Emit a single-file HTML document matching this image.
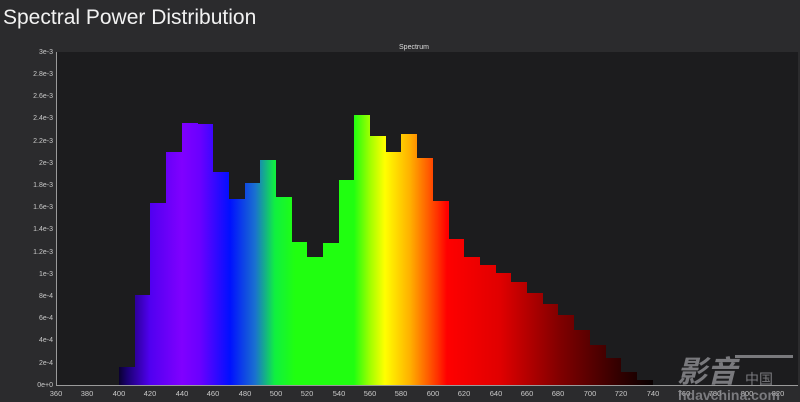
<!DOCTYPE html>
<html><head><style>
html,body{margin:0;padding:0;background:#2b2b2d;}
svg{display:block}
</style></head><body>
<svg width="800" height="402" viewBox="0 0 800 402" xmlns="http://www.w3.org/2000/svg" font-family="Liberation Sans, sans-serif">
<defs>
<linearGradient id="sp" gradientUnits="userSpaceOnUse" x1="119" y1="0" x2="653" y2="0">
<stop offset="0" stop-color="#0a0030"/>
<stop offset="0.015" stop-color="#1a0070"/>
<stop offset="0.058" stop-color="#5000f0"/>
<stop offset="0.118" stop-color="#8000ff"/>
<stop offset="0.152" stop-color="#6a00ff"/>
<stop offset="0.208" stop-color="#0010ff"/>
<stop offset="0.255" stop-color="#1a70d0"/>
<stop offset="0.292" stop-color="#10f040"/>
<stop offset="0.33" stop-color="#20ff10"/>
<stop offset="0.44" stop-color="#20ff10"/>
<stop offset="0.47" stop-color="#a0ff00"/>
<stop offset="0.498" stop-color="#ffff00"/>
<stop offset="0.545" stop-color="#ffb000"/>
<stop offset="0.597" stop-color="#ff3000"/>
<stop offset="0.614" stop-color="#ff0000"/>
<stop offset="0.714" stop-color="#e00000"/>
<stop offset="0.826" stop-color="#800000"/>
<stop offset="0.94" stop-color="#300000"/>
<stop offset="1" stop-color="#080000"/>
</linearGradient>
</defs>
<rect width="800" height="402" fill="#2b2b2d"/>
<text x="3" y="24" font-size="21" fill="#f2f2f2">Spectral Power Distribution</text>
<text x="414" y="49" font-size="7" fill="#ddd" text-anchor="middle">Spectrum</text>
<rect x="56" y="52" width="742" height="333" fill="#1c1c1e"/>
<path fill="url(#sp)" d="M119 385 V367 H135 V295 H150 V203 H166 V152 H182 V123 H198 V124 H213 V172 H229 V199 H245 V183 H260 V160 H276 V197 H292 V242 H307 V257 H323 V243 H339 V180 H354 V115 H370 V136 H386 V152 H401 V134 H417 V158 H433 V201 H449 V239 H464 V257 H480 V265 H496 V273 H511 V282 H527 V293 H543 V304 H558 V315 H574 V330 H590 V345 H606 V358 H621 V372 H637 V380 H653 V385 Z"/>
<g stroke="#9a9a9a" stroke-width="1" fill="none">
<path d="M56.5 52 V385.5 H798"/>
</g>
<g font-size="7" fill="#c8c8c8" text-anchor="end">
<text x="53" y="54">3e-3</text>
<text x="53" y="76">2.8e-3</text>
<text x="53" y="98">2.6e-3</text>
<text x="53" y="120">2.4e-3</text>
<text x="53" y="143">2.2e-3</text>
<text x="53" y="165">2e-3</text>
<text x="53" y="187">1.8e-3</text>
<text x="53" y="209">1.6e-3</text>
<text x="53" y="231">1.4e-3</text>
<text x="53" y="254">1.2e-3</text>
<text x="53" y="276">1e-3</text>
<text x="53" y="298">8e-4</text>
<text x="53" y="320">6e-4</text>
<text x="53" y="342">4e-4</text>
<text x="53" y="365">2e-4</text>
<text x="53" y="387">0e+0</text>
</g>
<g font-size="7.5" fill="#c8c8c8" text-anchor="middle">
<text x="56" y="396">360</text><text x="87" y="396">380</text><text x="119" y="396">400</text><text x="150" y="396">420</text><text x="182" y="396">440</text><text x="213" y="396">460</text><text x="245" y="396">480</text><text x="276" y="396">500</text><text x="307" y="396">520</text><text x="339" y="396">540</text><text x="370" y="396">560</text><text x="401" y="396">580</text><text x="433" y="396">600</text><text x="464" y="396">620</text><text x="496" y="396">640</text><text x="527" y="396">660</text><text x="558" y="396">680</text><text x="590" y="396">700</text><text x="621" y="396">720</text><text x="653" y="396">740</text><text x="684" y="396">760</text><text x="715" y="396">780</text><text x="747" y="396">800</text><text x="778" y="396">820</text>
</g>
<g fill="#8a8a8e" opacity="0.85">
<text x="677" y="382" font-size="30" font-style="italic" font-family="Noto Sans CJK SC, sans-serif" font-weight="bold">影音</text>
<text x="745" y="384" font-size="14" font-family="Noto Sans CJK SC, sans-serif">中国</text>
<rect x="735" y="355" width="58" height="3"/>
<text x="678" y="400" font-size="14" font-weight="bold">hdavchina.com</text>
</g>
</svg>
</body></html>
